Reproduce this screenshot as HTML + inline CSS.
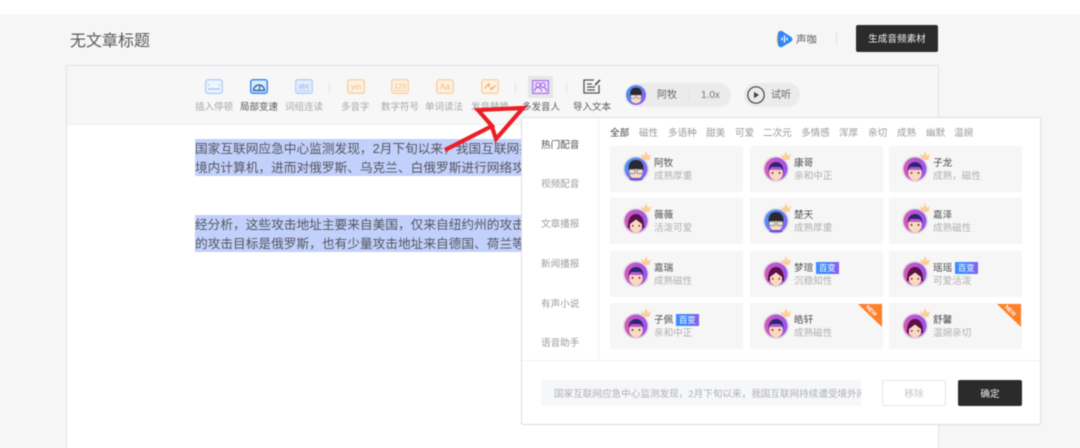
<!DOCTYPE html>
<html lang="zh"><head><meta charset="utf-8"><title>无文章标题</title>
<style>
html,body{margin:0;padding:0;background:#fff}
body{width:1080px;height:448px;overflow:hidden;position:relative;font-family:"Liberation Sans","Noto Sans CJK SC",sans-serif}
#r{position:absolute;left:0;top:0;width:1080px;height:448px;overflow:hidden;filter:blur(.4px);background:#fff}
#r div,#r span,#r svg{position:absolute;white-space:nowrap}
.l{font-size:9.5px;line-height:12px;top:102px;color:#a8a8a8}
.ln{position:absolute;left:195px;width:340px;height:18.5px;background:#c2d1fb;font-size:12.7px;line-height:21px;color:#55555f;overflow:hidden}
.sd{left:541px;font-size:9.6px;line-height:12px;color:#9c9c9c}
.tg{top:127.5px;font-size:9.6px;line-height:12px;color:#9a9a9a}
.c{width:133px;height:46px;background:#f6f6f6;border-radius:2px}
.c .n{left:44px;top:11.5px;font-size:9.6px;line-height:12px;color:#4c4c4c}
.c .s{left:44px;top:25px;font-size:9.6px;line-height:12px;color:#b0b0b0}
.c .a{left:12px;top:5px;width:32px;height:32px;overflow:visible}
.c .b{left:66px;top:11px;width:22.5px;height:11.5px;overflow:hidden;background:linear-gradient(90deg,#3d8cff 45%,#8e5ced);color:#fff;font-size:8.4px;line-height:13px;text-align:center}
.c .w{right:1px;top:1px;width:24px;height:23px;background:#ff7f2a;clip-path:polygon(0 0,100% 0,100% 100%)}
.c .w b{position:absolute;left:6px;top:4px;font-size:5.6px;line-height:7px;color:#fff;font-weight:700;transform:rotate(45deg)}
.sep{width:1px;height:12px;background:#e2e2e2}
</style></head><body>
<div id="r">
<svg width="0" height="0" style="left:0;top:0">
<defs>
<linearGradient id="g1" x1="0" y1="0" x2="1" y2="1"><stop offset="0" stop-color="#3f9bff"/><stop offset="1" stop-color="#9a55ee"/></linearGradient>
<linearGradient id="g2" x1="0" y1="0" x2="1" y2="0"><stop offset="0" stop-color="#d858b8"/><stop offset="1" stop-color="#9a55ee"/></linearGradient>
<symbol id="crown" viewBox="0 0 12 11"><path d="M1 4l3 2 2-5 2 5 3-2-1.500 6H2.500z" fill="#fbcf9c"/></symbol>
<symbol id="ag" viewBox="0 0 32 32"><circle cx="14" cy="18" r="13" fill="#dcdce2"/><circle cx="14" cy="18" r="11.500" fill="url(#g1)"/><path d="M6.500 18c0-7 3.500-9 7.500-9s7.500 2 7.500 9v3h-15z" fill="#2a2a2e"/><path d="M8 18h12v5c0 3-3 5-6 5s-6-2-6-5z" fill="#fcd9bd"/><rect x="7" y="18.500" width="6" height="4" rx="1" fill="#e4e4e4" stroke="#777" stroke-width=".8"/><rect x="15" y="18.500" width="6" height="4" rx="1" fill="#e4e4e4" stroke="#777" stroke-width=".8"/><path d="M8 27h12l1 1.500c-4 1.500-10 1.500-14 0z" fill="#6a4fd8"/><use href="#crown" x="18" y="-1" width="12" height="11"/></symbol>
<symbol id="am" viewBox="0 0 32 32"><circle cx="14" cy="18" r="13" fill="#dcdce2"/><circle cx="14" cy="18" r="11.500" fill="url(#g2)"/><path d="M7.500 19v5c1 3.500 4 5.500 6.500 5.500s5.500-2 6.500-5.500v-5z" fill="#fcd9bd"/><path d="M6.500 21c0-7 3-10 7.500-10s7.500 3 7.500 10c-1-3-2-4.500-3.500-5H10c-1.500.5-2.500 2-3.500 5z" fill="#2c2670"/><rect x="9.700" y="21" width="1.600" height="1.800" fill="#444"/><rect x="16.700" y="21" width="1.600" height="1.800" fill="#444"/><use href="#crown" x="18" y="-1" width="12" height="11"/></symbol>
<symbol id="af" viewBox="0 0 32 32"><circle cx="14" cy="18" r="13" fill="#dcdce2"/><circle cx="14" cy="18" r="11.500" fill="url(#g2)"/><path d="M6 25c-.5-9 3-14 8-14s8.500 5 8 14h-2V25H8z" fill="#5a1048"/><path d="M8 21v4c1.500 3 3.500 4.500 6 4.500s4.500-1.500 6-4.500v-4l-6-4.500z" fill="#fcd9bd"/><rect x="10" y="22" width="1.500" height="1.600" fill="#444"/><rect x="16.500" y="22" width="1.500" height="1.600" fill="#444"/><use href="#crown" x="18" y="-1" width="12" height="11"/></symbol>
</defs></svg>

<div style="left:0;top:14px;width:1080px;height:434px;background:#f6f6f6"></div>
<div style="left:70px;top:30.5px;font-size:16px;line-height:22px;color:#5a5a5a">无文章标题</div>

<svg style="left:776px;top:30px" width="17" height="18" viewBox="0 0 17 18"><path d="M2 3.500C2 1.500 4 .5 6 1l8.500 5.500c2.500 1.500 2.500 4 0 5.500L6 17c-2 .5-4-.5-4-2.500z" fill="#2f86f6"/><path d="M2 3.500C.3 6.500.3 11.500 2 14.500z" fill="#f0a34a"/><path d="M6 7.500v3M8.500 5.500v7M11 7.500v3" stroke="#fff" stroke-width="1.300"/></svg>
<div style="left:796px;top:33.5px;font-size:10.4px;line-height:14px;color:#5c5c5c">声咖</div>
<div class="sep" style="left:836px;top:33px"></div>
<div style="left:856px;top:25px;width:82px;height:27px;overflow:hidden;background:#2b2b2b;border-radius:2px;color:#f0f0f0;font-size:9.6px;line-height:30px;text-align:center">生成音频素材</div>

<div style="left:66px;top:65px;width:871px;height:390px;background:#fff;border:1px solid #dfe3ee"></div>
<div style="left:67px;top:66px;width:871px;height:58px;background:#f7f7f7;border-bottom:1px solid #eee"></div>

<svg style="left:205px;top:79px" width="18" height="15" viewBox="0 0 18 15" fill="none" stroke="#b4cffa"><rect x=".8" y=".8" width="16.400" height="13.400" rx="2" fill="#eef4fe" stroke-width="1.500"/><path d="M3 6h1.500M13.500 6H15M3 10h12" stroke-width="1.200" stroke="#a1c0f2"/></svg>
<svg style="left:250px;top:79px" width="18" height="15" viewBox="0 0 18 15" fill="none"><rect x=".8" y=".8" width="16.400" height="13.400" rx="2" fill="#dcebfd" stroke="#3a8bf2" stroke-width="1.500"/><path d="M3.500 11.500a5.500 5.500 0 0 1 11 0z" stroke="#2f6aa8" stroke-width="1.400"/><path d="M9 11l1-4" stroke="#2f6aa8" stroke-width="1.200"/></svg>
<svg style="left:295px;top:79px" width="18" height="15" viewBox="0 0 18 15" fill="none"><rect x=".8" y=".8" width="16.400" height="13.400" rx="2" fill="#e6eefd" stroke="#b4cffa" stroke-width="1.500"/><text x="9" y="9.500" font-size="7" font-family="Liberation Sans" text-anchor="middle" fill="#8fb3ee">abc</text><path d="M3 11.500h12" stroke="#b4cffa"/></svg>
<div class="sep" style="left:329px;top:83px;height:10px"></div>
<svg style="left:347px;top:79px" width="18" height="15" viewBox="0 0 18 15"><rect x=".8" y=".8" width="16.400" height="13.400" rx="2" fill="#fdf1e2" stroke="#fbd3a4" stroke-width="1.500"/><text x="9" y="10.500" font-size="8" font-family="Liberation Sans" text-anchor="middle" fill="#f5bb7c">yin</text></svg>
<svg style="left:391px;top:79px" width="18" height="15" viewBox="0 0 18 15"><rect x=".8" y=".8" width="16.400" height="13.400" rx="2" fill="#fdf1e2" stroke="#fbd3a4" stroke-width="1.500"/><text x="9" y="9.500" font-size="7" font-family="Liberation Sans" text-anchor="middle" fill="#f5bb7c">123</text><path d="M3 11.500h12" stroke="#fbd3a4"/></svg>
<svg style="left:436px;top:79px" width="18" height="15" viewBox="0 0 18 15"><rect x=".8" y=".8" width="16.400" height="13.400" rx="2" fill="#fdf1e2" stroke="#fbd3a4" stroke-width="1.500"/><text x="9" y="10.500" font-size="8.500" font-family="Liberation Sans" text-anchor="middle" fill="#f5bb7c">Aa</text></svg>
<svg style="left:481px;top:79px" width="18" height="15" viewBox="0 0 18 15" fill="none"><rect x=".8" y=".8" width="16.400" height="13.400" rx="2" fill="#fdf1e2" stroke="#fbd3a4" stroke-width="1.500"/><path d="M4 10c0-2 2-4 3.500-4M14 6c0 2-2 3.500-3.500 3.500M7 4l1.500 2L7 8M11 8l-1.500 1.500L11 11" stroke="#f3b069" stroke-width="1.200"/></svg>
<div class="sep" style="left:515px;top:83px;height:10px"></div>
<div style="left:528px;top:76px;width:25px;height:22px;background:#e6e6e6"></div>
<svg style="left:532px;top:80px" width="17" height="14" viewBox="0 0 17 14" fill="none" stroke="#a86fe8" stroke-width="1.200"><rect x=".6" y=".6" width="15.800" height="12.800" fill="#efe4fb"/><circle cx="6" cy="5" r="2.200"/><circle cx="11" cy="5" r="2.200"/><path d="M2.500 11.500c0-3 1.500-4 3.500-4s3.500 1 3.500 4M11 7.500c2 0 3.500 1 3.500 4"/></svg>
<div class="sep" style="left:566px;top:83px;height:10px"></div>
<svg style="left:583px;top:79px" width="18" height="15" viewBox="0 0 18 15" fill="none" stroke="#555" stroke-width="1.300"><path d="M11 1H1v13h15V6"/><path d="M4 5h5M4 8h8M4 11h8"/><path d="M12 6l5-5" stroke-width="1.700"/></svg>

<div class="l" style="left:195px">插入停顿</div>
<div class="l" style="left:240px;color:#555">局部变速</div>
<div class="l" style="left:285px">词组连读</div>
<div class="l" style="left:341px">多音字</div>
<div class="l" style="left:381px">数字符号</div>
<div class="l" style="left:425px">单词读法</div>
<div class="l" style="left:471px">发音替换</div>
<div class="l" style="left:522px;color:#5c5c5c">多发音人</div>
<div class="l" style="left:573px;color:#5c5c5c">导入文本</div>

<div style="left:625px;top:83px;width:106px;height:24px;border-radius:12px;background:#ebebeb"></div>
<svg style="left:626px;top:85px" width="20" height="20" viewBox="2 6 24 24"><circle cx="14" cy="18" r="12" fill="url(#g1)"/><path d="M7 17c0-6 3-8 7-8s7 2 7 8v4H7z" fill="#2a2a2e"/><path d="M8 18h12v5c0 3-3 5-6 5s-6-2-6-5z" fill="#fcd9bd"/><rect x="7.500" y="18" width="5.500" height="4" rx="1" fill="#e4e4e4" stroke="#777" stroke-width=".7"/><rect x="15" y="18" width="5.500" height="4" rx="1" fill="#e4e4e4" stroke="#777" stroke-width=".7"/></svg>
<div style="left:657px;top:89px;font-size:10px;line-height:14px;color:#666">阿牧</div>
<div style="left:688px;top:89px;width:1px;height:12px;background:#e0e0e0"></div>
<div style="left:701px;top:89px;font-size:10px;line-height:14px;color:#777">1.0x</div>
<div style="left:744px;top:83px;width:56px;height:24px;border-radius:12px;background:#ebebeb"></div>
<svg style="left:747px;top:86px" width="18" height="18" viewBox="0 0 18 18"><circle cx="9" cy="9" r="8.200" fill="none" stroke="#444" stroke-width="1.200"/><path d="M7 5.800v6.400L12 9z" fill="#444"/></svg>
<div style="left:771px;top:89px;font-size:10px;line-height:14px;color:#666">试听</div>

<div class="ln" style="top:139px">国家互联网应急中心监测发现，2月下旬以来，我国互联网持</div>
<div class="ln" style="top:157.500px">境内计算机，进而对俄罗斯、乌克兰、白俄罗斯进行网络攻击</div>
<div class="ln" style="top:215px">经分析，这些攻击地址主要来自美国，仅来自纽约州的攻击地</div>
<div class="ln" style="top:233.500px">的攻击目标是俄罗斯，也有少量攻击地址来自德国、荷兰等国</div>

<div style="left:521px;top:117px;width:518px;height:306px;background:#fff;border:1px solid #dcdce8;border-radius:2px"></div>
<div style="left:598px;top:118px;width:1px;height:242px;background:#f2f2f2"></div>
<div style="left:522px;top:360px;width:518px;height:1px;background:#f2f2f2"></div>

<div class="sd" style="top:139.5px;color:#4c4c4c">热门配音</div>
<div class="sd" style="top:178.5px">视频配音</div>
<div class="sd" style="top:218.5px">文章播报</div>
<div class="sd" style="top:258.5px">新闻播报</div>
<div class="sd" style="top:298.5px">有声小说</div>
<div class="sd" style="top:337.5px">语音助手</div>

<div class="tg" style="left:610px;color:#3c3c3c">全部</div>
<div class="tg" style="left:639px">磁性</div>
<div class="tg" style="left:668px">多语种</div>
<div class="tg" style="left:706px">甜美</div>
<div class="tg" style="left:735px">可爱</div>
<div class="tg" style="left:763px">二次元</div>
<div class="tg" style="left:801px">多情感</div>
<div class="tg" style="left:839px">浑厚</div>
<div class="tg" style="left:868px">亲切</div>
<div class="tg" style="left:897px">成熟</div>
<div class="tg" style="left:926px">幽默</div>
<div class="tg" style="left:954px">温婉</div>

<div class="c" style="left:610px;top:146px"><svg class="a" viewBox="0 0 32 32"><use href="#ag"/></svg><div class="n">阿牧</div><div class="s">成熟厚重</div></div>
<div class="c" style="left:750px;top:146px"><svg class="a" viewBox="0 0 32 32"><use href="#am"/></svg><div class="n">康哥</div><div class="s">亲和中正</div></div>
<div class="c" style="left:889px;top:146px"><svg class="a" viewBox="0 0 32 32"><use href="#am"/></svg><div class="n">子龙</div><div class="s">成熟，磁性</div></div>

<div class="c" style="left:610px;top:198px"><svg class="a" viewBox="0 0 32 32"><use href="#af"/></svg><div class="n">薇薇</div><div class="s">活泼可爱</div></div>
<div class="c" style="left:750px;top:198px"><svg class="a" viewBox="0 0 32 32"><use href="#ag"/></svg><div class="n">楚天</div><div class="s">成熟厚重</div></div>
<div class="c" style="left:889px;top:198px"><svg class="a" viewBox="0 0 32 32"><use href="#am"/></svg><div class="n">嘉泽</div><div class="s">成熟磁性</div></div>

<div class="c" style="left:610px;top:251px"><svg class="a" viewBox="0 0 32 32"><use href="#am"/></svg><div class="n">嘉瑞</div><div class="s">成熟磁性</div></div>
<div class="c" style="left:750px;top:251px"><svg class="a" viewBox="0 0 32 32"><use href="#af"/></svg><div class="n">梦瑄</div><div class="b">百变</div><div class="s">沉稳知性</div></div>
<div class="c" style="left:889px;top:251px"><svg class="a" viewBox="0 0 32 32"><use href="#af"/></svg><div class="n">瑶瑶</div><div class="b">百变</div><div class="s">可爱活泼</div></div>

<div class="c" style="left:610px;top:303px"><svg class="a" viewBox="0 0 32 32"><use href="#am"/></svg><div class="n">子佩</div><div class="b">百变</div><div class="s">亲和中正</div></div>
<div class="c" style="left:750px;top:303px"><svg class="a" viewBox="0 0 32 32"><use href="#am"/></svg><div class="n">皓轩</div><div class="s">成熟磁性</div><div class="w"><b>NEW</b></div></div>
<div class="c" style="left:889px;top:303px"><svg class="a" viewBox="0 0 32 32"><use href="#af"/></svg><div class="n">舒馨</div><div class="s">温婉亲切</div><div class="w"><b>NEW</b></div></div>

<div style="left:541px;top:380px;width:320px;height:26px;background:#f6f7fa;overflow:hidden;color:#b0b0b4;font-size:9.6px;line-height:29px;text-indent:13px">国家互联网应急中心监测发现，2月下旬以来，我国互联网持续遭受境外网络攻击</div>
<div style="left:882px;top:380px;width:62px;height:24px;overflow:hidden;background:#fff;border:1px solid #e6e6e6;border-radius:2px;color:#c4c4c4;font-size:9.6px;line-height:27px;text-align:center">移除</div>
<div style="left:958px;top:380px;width:64px;height:26px;overflow:hidden;background:#2b2b2b;border-radius:2px;color:#f0f0f0;font-size:9.6px;line-height:29px;text-align:center">确定</div>

<svg style="left:430px;top:95px" width="110" height="65" viewBox="430 95 110 65"><path d="M445 150L492 126 478 110 523 108 496 139 491 124" fill="none" stroke="#ea1f27" stroke-width="4.200" stroke-linejoin="miter" stroke-miterlimit="6"/></svg>
</div>
</body></html>
